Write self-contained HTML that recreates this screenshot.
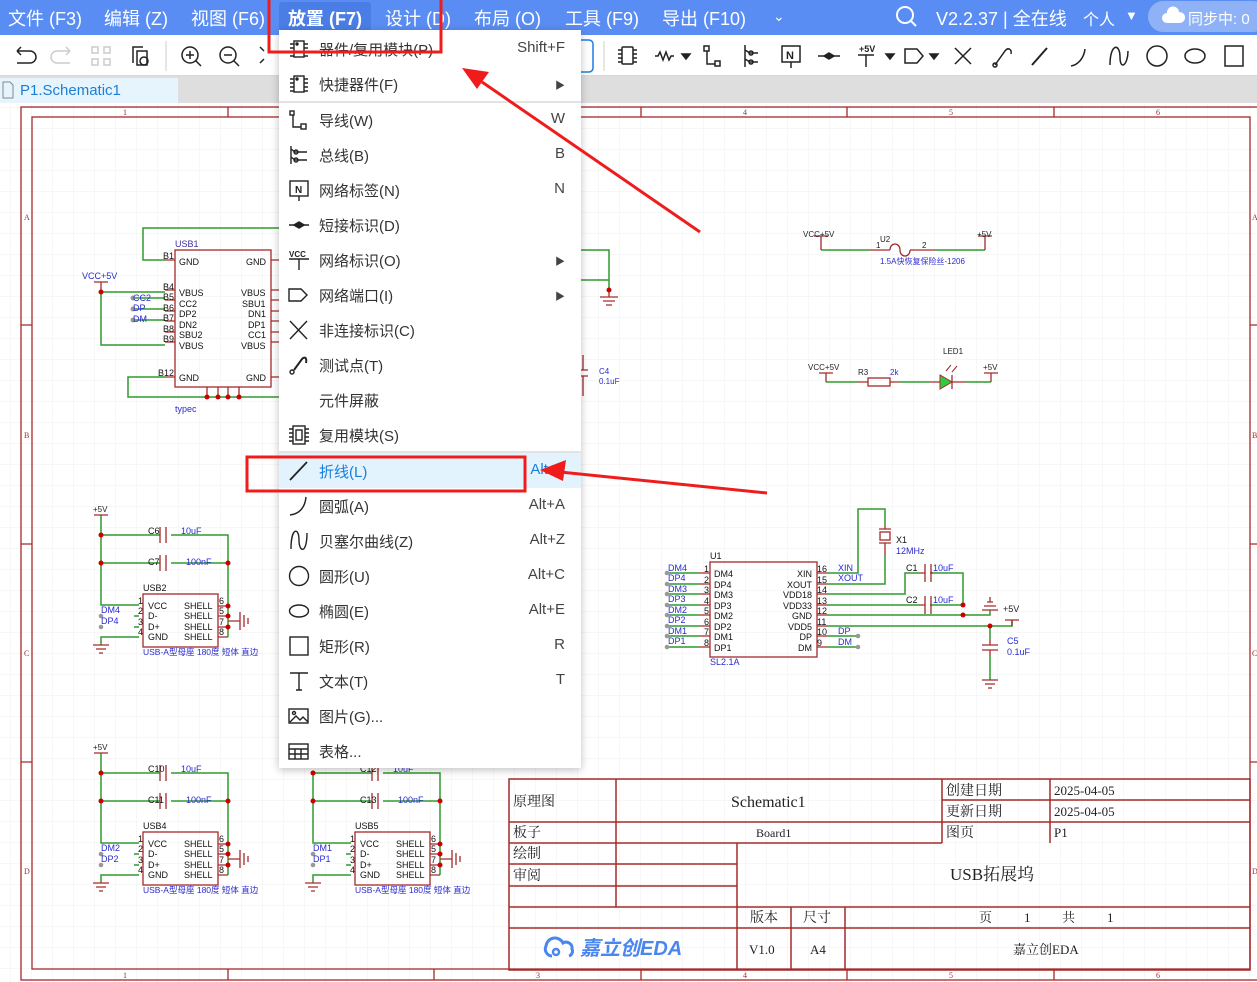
<!DOCTYPE html>
<html><head><meta charset="utf-8">
<style>
*{margin:0;padding:0;box-sizing:border-box}
body{width:1257px;height:982px;overflow:hidden;position:relative;background:#fff;font-family:"Liberation Sans","Noto Sans CJK SC",sans-serif}
#top{position:absolute;left:0;top:0;width:1257px;height:35px;background:#5a8df4;color:#fff;font-size:18px}
#top span{position:absolute;top:5px;white-space:nowrap}
#tb{position:absolute;left:0;top:35px;width:1257px;height:41px;background:#fff;border-bottom:1px solid #d8d8d8}
#gray{position:absolute;left:0;top:76px;width:1257px;height:28px;background:#dedede}
#tab{position:absolute;left:0;top:78px;width:178px;height:26px;background:#e5f4fd;color:#1c7fd6;font-size:15px;padding:4px 0 0 20px}
#canvas{position:absolute;left:0;top:103px}
#menu{position:absolute;left:279px;top:30px;width:302px;height:738px;background:#fff;box-shadow:0 2px 8px rgba(0,0,0,.25);font-size:15px;color:#333}
.mi{position:absolute;left:0;width:302px;height:35px}
.mi .t{position:absolute;left:40px;top:8px;white-space:nowrap}
.mi .k{position:absolute;right:16px;top:8px;color:#444}
.mi svg{position:absolute;left:9px;top:7px}
.sep{position:absolute;left:0;width:302px;height:2px;background:#e3e3e3}
</style></head><body>
<div id="top">
<span style="left:8px">文件 (F3)</span>
<span style="left:104px">编辑 (Z)</span>
<span style="left:191px">视图 (F6)</span>
<div style="position:absolute;left:279px;top:2px;width:92px;height:29px;background:#4a7ee6;border-radius:3px"></div>
<span style="left:288px;font-weight:bold">放置 (F7)</span>
<span style="left:385px">设计 (D)</span>
<span style="left:474px">布局 (O)</span>
<span style="left:565px">工具 (F9)</span>
<span style="left:662px">导出 (F10)</span>
<span style="left:773px;font-size:14px;top:8px">&#8964;</span>
<svg style="position:absolute;left:895px;top:5px" width="24" height="24"><circle cx="10" cy="10" r="8" fill="none" stroke="#fff" stroke-width="2"/><line x1="16" y1="16" x2="21" y2="21" stroke="#fff" stroke-width="2"/></svg>
<span style="left:936px">V2.2.37 | 全在线</span>
<span style="left:1083px;font-size:16px;top:6px">个人</span>
<span style="left:1125px;font-size:13px;top:8px">▼</span>
<div style="position:absolute;left:1148px;top:1px;width:120px;height:31px;border-radius:16px;background:#8fb2f6"></div>
<svg style="position:absolute;left:1162px;top:6px" width="24" height="20"><path d="M5 17a5 5 0 0 1 0-10a6 6 0 0 1 12-1a5 5 0 0 1 1 11z" fill="#fff"/></svg>
<span style="left:1188px;font-size:15px;top:8px">同步中: 0</span>
</div>
<div id="tb">
<svg width="1257" height="41" style="position:absolute;left:0;top:0" fill="none" stroke="#222" stroke-width="1.5">
<path d="M17 15h13a6 6 0 0 1 0 12h-13M17 15l4-4M17 15l4 4" transform="translate(0,1)"/>
<path d="M70 16h-13a6 6 0 0 0 0 12h13M70 16l-4-4M70 16l-4 4" stroke="#ccc"/>
<g stroke="#ccc"><rect x="92" y="12" width="6" height="6"/><rect x="104" y="12" width="6" height="6"/><rect x="92" y="24" width="6" height="6"/><rect x="104" y="24" width="6" height="6"/></g>
<path d="M133 28v-16h10M137 30v-14h10v14z"/><circle cx="144" cy="26" r="4"/>
<line x1="166" y1="6" x2="166" y2="36" stroke="#ddd"/>
<circle cx="190" cy="20" r="8"/><path d="M186 20h8M190 16v8M196 26l5 5"/>
<circle cx="228" cy="20" r="8"/><path d="M224 20h8M234 26l5 5"/>
<path d="M260 12l4 4M260 28l4-4"/>
<rect x="560" y="5" width="33" height="32" rx="4" stroke="#1b7fe0"/>
<line x1="604" y1="6" x2="604" y2="36" stroke="#ddd"/>
<rect x="622" y="12" width="11" height="17" rx="1"/><path d="M618 15h4M618 19h4M618 23h4M618 27h4M633 15h4M633 19h4M633 23h4M633 27h4"/>
<path d="M655 21h3l2-4 3 8 3-8 3 8 2-4h3"/><path d="M682 19h8l-4 5z" fill="#222"/>
<rect x="704" y="11" width="5" height="5"/><path d="M707 16v13h8"/><rect x="715" y="26" width="5" height="5"/>
<path d="M745 10v22M745 15l5 3h8M745 24l5 3h8"/><circle cx="751" cy="18" r="2"/><circle cx="751" cy="27" r="2"/>
<rect x="782" y="11" width="18" height="16"/><path d="M791 27v6"/><text x="786" y="24" font-size="11" fill="#222" stroke="none" font-weight="bold">N</text>
<path d="M818 21h22"/><path d="M824 21l5-3 5 3-5 3z" fill="#222"/>
<text x="859" y="17" font-size="9" fill="#222" stroke="none" font-weight="bold">+5V</text><path d="M858 20h16M866 20v12"/><path d="M886 19h8l-4 5z" fill="#222"/>
<path d="M905 14h12l6 7-6 7h-12z"/><path d="M930 19h8l-4 5z" fill="#222"/>
<path d="M955 13l16 16M971 13l-16 16"/>
<path d="M995 30l10-14c3-4 7-2 6 3" /><circle cx="995" cy="30" r="2"/>
<path d="M1032 30l15-17" stroke-width="2"/>
<path d="M1071 31c7-1 13-8 14-17"/>
<path d="M1110 30c0-22 10-22 10-8s8 8 8-6"/>
<circle cx="1157" cy="21" r="10"/>
<ellipse cx="1195" cy="21" rx="10" ry="7"/>
<rect x="1225" y="11" width="18" height="20"/>
</svg>
</div>
<div id="gray"></div>
<div id="tab">P1.Schematic1</div>
<svg style="position:absolute;left:2px;top:81px" width="12" height="18"><path d="M1 1h7l3 3v13h-10z" fill="none" stroke="#888"/></svg>

<svg id="canvas" width="1257" height="879" viewBox="0 103 1257 879" font-family="Liberation Sans, Noto Sans CJK SC, sans-serif">
<defs>
<pattern id="g" width="21" height="21" patternUnits="userSpaceOnUse" x="11" y="3"><path d="M21 0V21H0" fill="none" stroke="#efefef" stroke-width="1"/></pattern>
</defs>
<rect x="0" y="103" width="1257" height="879" fill="#fff"/>
<rect x="0" y="103" width="1257" height="879" fill="url(#g)"/>
<g fill="none" stroke="#a52a2a" stroke-width="1.3">
<rect x="21" y="107" width="1245" height="873"/>
<rect x="32" y="117" width="1218" height="852"/>
<path d="M228 107v10M434 107v10M641 107v10M847 107v10M1054 107v10M228 969v11M434 969v11M641 969v11M847 969v11M1054 969v11M21 325h11M21 544h11M21 762h11M1250 325h7M1250 544h7M1250 762h7"/>
</g>
<g font-size="8" fill="#a52a2a" font-family="Liberation Serif,serif">
<text x="123" y="115">1</text><text x="743" y="115">4</text><text x="949" y="115">5</text><text x="1156" y="115">6</text>
<text x="123" y="978">1</text><text x="536" y="978">3</text><text x="743" y="978">4</text><text x="949" y="978">5</text><text x="1156" y="978">6</text>
<text x="24" y="220">A</text><text x="24" y="438">B</text><text x="24" y="656">C</text><text x="24" y="874">D</text>
<text x="1252" y="220">A</text><text x="1252" y="438">B</text><text x="1252" y="656">C</text><text x="1252" y="874">D</text>
</g>

<g fill="none" stroke="#a52a2a" stroke-width="1.5">
<rect x="509" y="779" width="741" height="191"/>
<path d="M509 822h741M509 843h433M942 800h308M509 864h228M509 886h228M509 907h741M509 928h741M616 779v128M737 843v127M942 779v64M1050 779v64M791 907v63M845 907v63"/>
</g>
<g font-size="14" fill="#222" font-family="Liberation Serif,Noto Serif CJK SC,serif">
<text x="513" y="806">原理图</text>
<text x="731" y="807" font-size="16">Schematic1</text>
<text x="946" y="795">创建日期</text><text x="1054" y="795" font-size="13">2025-04-05</text>
<text x="946" y="816">更新日期</text><text x="1054" y="816" font-size="13">2025-04-05</text>
<text x="513" y="837">板子</text><text x="756" y="837" font-size="12">Board1</text>
<text x="946" y="837">图页</text><text x="1054" y="837" font-size="13">P1</text>
<text x="513" y="858">绘制</text><text x="513" y="880">审阅</text>
<text x="950" y="880" font-size="17">USB拓展坞</text>
<text x="750" y="922">版本</text><text x="803" y="922">尺寸</text>
<text x="979" y="922" font-size="13">页</text><text x="1024" y="922" font-size="13">1</text><text x="1062" y="922" font-size="13">共</text><text x="1107" y="922" font-size="13">1</text>
<text x="749" y="954" font-size="13">V1.0</text><text x="810" y="954" font-size="13">A4</text>
<text x="1013" y="954" font-size="13">嘉立创EDA</text>
</g>
<g>
<path d="M552 956a7 7 0 0 1-6-10a9 9 0 0 1 17-3a6 6 0 0 1 9 6a5 5 0 0 1-3 7" fill="none" stroke="#4a86f0" stroke-width="3"/>
<circle cx="556" cy="952" r="3" fill="none" stroke="#4a86f0" stroke-width="2.5"/>
<text x="580" y="955" font-size="20" font-weight="bold" fill="#4a86f0" font-style="italic">嘉立创EDA</text>
</g>

<g id="sch" font-size="9">
<g fill="none" stroke="#2f9a2f" stroke-width="1.5">
<path d="M165 260h-22v-32h140"/>
<path d="M101 292h64M101 292v53h64"/>
<path d="M133 298h32M133 309h32M133 320h32"/>
<path d="M165 377h-37v20h155"/>
<path d="M581 250h28v40M581 280h28"/>
<path d="M821 250h49M935 250h50M826 382h32M900 382h30M966 382h25"/>
</g>
<g fill="none" stroke="#a52a2a" stroke-width="1.3">
<rect x="175" y="250" width="96" height="137"/>
<path d="M165 260h10M165 290h10M165 300h10M165 311h10M165 321h10M165 332h10M165 342h10M165 377h10M271 260h10M271 290h10M271 300h10M271 311h10M271 321h10M271 332h10M271 342h10M271 377h10"/>
<path d="M207 387v10M218 387v10M228 387v10M239 387v10"/>
<path d="M94 282h14M101 282v10"/>
<path d="M600 297h18M603 301h12M606 305h6M609 290v7"/>
<path d="M583 355v15M578 370h10M578 376h10M583 376v20"/>
<path d="M814 236h14M821 236v14M978 236h14M985 236v14"/>
<path d="M870 250h20M910 250h25M890 250c0-8 10-8 10 0s10 8 10 0"/>
<path d="M819 373h14M826 373v9M984 373h14M991 373v9M858 382h10M890 382h10M930 382h10M952 382h14"/>
<rect x="868" y="378" width="22" height="8"/>
<path d="M952 375v14"/>
</g>
<path d="M940 375v14l12-7z" fill="#2ecc40" stroke="#a52a2a"/>
<path d="M946 371l5-6M952 372l5-6" stroke="#a52a2a"/>
<g fill="#c00"><circle cx="101" cy="292" r="2.5"/><circle cx="207" cy="397" r="2.5"/><circle cx="218" cy="397" r="2.5"/><circle cx="228" cy="397" r="2.5"/><circle cx="239" cy="397" r="2.5"/><circle cx="609" cy="290" r="2.5"/></g>
<g fill="#999"><circle cx="133" cy="298" r="2.5"/><circle cx="133" cy="309" r="2.5"/><circle cx="133" cy="320" r="2.5"/></g>
<g fill="#111">
<text x="179" y="265">GND</text><text x="246" y="265">GND</text>
<text x="179" y="296">VBUS</text><text x="179" y="307">CC2</text><text x="179" y="317">DP2</text><text x="179" y="328">DN2</text><text x="179" y="338">SBU2</text><text x="179" y="349">VBUS</text>
<text x="241" y="296">VBUS</text><text x="242" y="307">SBU1</text><text x="248" y="317">DN1</text><text x="248" y="328">DP1</text><text x="248" y="338">CC1</text><text x="241" y="349">VBUS</text>
<text x="179" y="381">GND</text><text x="246" y="381">GND</text>
<text x="163" y="259">B1</text><text x="163" y="290">B4</text><text x="163" y="300">B5</text><text x="163" y="311">B6</text><text x="163" y="321">B7</text><text x="163" y="332">B8</text><text x="163" y="342">B9</text><text x="158" y="376">B12</text>
</g>
<g fill="#2a2ad0">
<text x="175" y="247" fill="#3a2fa0">USB1</text><text x="82" y="279">VCC+5V</text>
<text x="133" y="301">CC2</text><text x="133" y="311">DP</text><text x="133" y="322">DM</text>
<text x="175" y="412">typec</text>
<text x="599" y="374" font-size="8">C4</text><text x="599" y="384" font-size="8">0.1uF</text>
<text x="803" y="237" fill="#222" font-size="8">VCC+5V</text><text x="977" y="237" fill="#222" font-size="8">+5V</text>
<text x="880" y="242" font-size="8" fill="#222">U2</text><text x="876" y="248" font-size="8" fill="#222">1</text><text x="922" y="248" font-size="8" fill="#222">2</text>
<text x="880" y="264" font-size="8">1.5A快恢复保险丝-1206</text>
<text x="808" y="370" fill="#222" font-size="8">VCC+5V</text><text x="983" y="370" fill="#222" font-size="8">+5V</text>
<text x="858" y="375" fill="#222" font-size="8">R3</text><text x="890" y="375" font-size="8">2k</text><text x="943" y="354" fill="#222" font-size="8">LED1</text>
</g>

<g fill="none" stroke="#2f9a2f" stroke-width="1.5">
<path d="M667 573h33M667 584h33M667 594h33M667 605h33M667 615h33M667 626h33M667 636h33M667 647h33"/>
<path d="M828 573h30v-64h27v16M828 584h57v-29"/>
<path d="M828 594h77v-21h15M930 573h33v32M828 605h92M930 605h33"/>
<path d="M828 615h162v-5M828 626h184v-6M828 636h30M828 647h30"/>
<path d="M990 626v14M990 655v25"/>
</g>
<g fill="none" stroke="#a52a2a" stroke-width="1.3">
<rect x="710" y="562" width="107" height="95"/>
<path d="M700 573h10M700 584h10M700 594h10M700 605h10M700 615h10M700 626h10M700 636h10M700 647h10M817 573h11M817 584h11M817 594h11M817 605h11M817 615h11M817 626h11M817 636h11M817 647h11"/>
<path d="M925 564v18M931 564v18M925 596v18M931 596v18M920 573h5M931 573h2M920 605h5"/>
<rect x="880" y="532" width="10" height="8"/><path d="M879 529h12M879 543h12M885 525v4M885 543v12"/>
<path d="M982 610h16M984 606h12M987 602h6M990 597v5"/>
<path d="M1005 620h14M1012 620v6"/>
<path d="M982 645h16M982 650h16M990 640v5M990 650v5M982 680h16M985 684h10M988 688h4"/>
</g>
<g fill="#c00"><circle cx="963" cy="605" r="2.5"/><circle cx="963" cy="615" r="2.5"/><circle cx="990" cy="626" r="2.5"/></g>
<g fill="#999"><circle cx="667" cy="573" r="2.3"/><circle cx="667" cy="584" r="2.3"/><circle cx="667" cy="594" r="2.3"/><circle cx="667" cy="605" r="2.3"/><circle cx="667" cy="615" r="2.3"/><circle cx="667" cy="626" r="2.3"/><circle cx="667" cy="636" r="2.3"/><circle cx="667" cy="647" r="2.3"/><circle cx="858" cy="636" r="2.3"/><circle cx="858" cy="647" r="2.3"/></g>
<g fill="#111">
<text x="714" y="577">DM4</text><text x="714" y="588">DP4</text><text x="714" y="598">DM3</text><text x="714" y="609">DP3</text><text x="714" y="619">DM2</text><text x="714" y="630">DP2</text><text x="714" y="640">DM1</text><text x="714" y="651">DP1</text>
<g text-anchor="end"><text x="812" y="577">XIN</text><text x="812" y="588">XOUT</text><text x="812" y="598">VDD18</text><text x="812" y="609">VDD33</text><text x="812" y="619">GND</text><text x="812" y="630">VDD5</text><text x="812" y="640">DP</text><text x="812" y="651">DM</text></g>
<text x="704" y="572">1</text><text x="704" y="583">2</text><text x="704" y="593">3</text><text x="704" y="604">4</text><text x="704" y="614">5</text><text x="704" y="625">6</text><text x="704" y="635">7</text><text x="704" y="646">8</text>
<text x="817" y="572">16</text><text x="817" y="583">15</text><text x="817" y="593">14</text><text x="817" y="604">13</text><text x="817" y="614">12</text><text x="817" y="625">11</text><text x="817" y="635">10</text><text x="817" y="646">9</text>
<text x="710" y="559">U1</text><text x="896" y="543">X1</text><text x="906" y="571">C1</text><text x="906" y="603">C2</text>
</g>
<g fill="#2a2ad0">
<text x="668" y="571">DM4</text><text x="668" y="581">DP4</text><text x="668" y="592">DM3</text><text x="668" y="602">DP3</text><text x="668" y="613">DM2</text><text x="668" y="623">DP2</text><text x="668" y="634">DM1</text><text x="668" y="644">DP1</text>
<text x="838" y="571">XIN</text><text x="838" y="581">XOUT</text><text x="838" y="634">DP</text><text x="838" y="645">DM</text>
<text x="710" y="665">SL2.1A</text><text x="896" y="554">12MHz</text><text x="933" y="571">10uF</text><text x="933" y="603">10uF</text>
<text x="1007" y="644">C5</text><text x="1007" y="655">0.1uF</text><text x="1003" y="612" fill="#222">+5V</text>
</g>
<g id="usbA"></g>
</g>
</svg>

<div id="menu">
<div class="mi" style="top:1px"><svg width="22" height="22" fill="none" stroke="#222" stroke-width="1.4"><rect x="6" y="3" width="10" height="16"/><path d="M2 6h4M2 10h4M2 14h4M2 18h4M16 6h4M16 10h4M16 14h4M16 18h4"/><circle cx="9" cy="6" r="1" fill="#222"/></svg><span class="t">器件/复用模块(P)</span><span class="k">Shift+F</span></div>
<div class="mi" style="top:36px"><svg width="22" height="22" fill="none" stroke="#222" stroke-width="1.4"><rect x="6" y="3" width="10" height="16"/><path d="M2 6h4M2 10h4M2 14h4M2 18h4M16 6h4M16 10h4M16 14h4M16 18h4"/><circle cx="9" cy="6" r="1" fill="#222"/></svg><span class="t">快捷器件(F)</span><span class="k" style="font-size:10px;top:11px">▶</span></div>
<div class="sep" style="top:71px"></div>
<div class="mi" style="top:72px"><svg width="22" height="22" fill="none" stroke="#222" stroke-width="1.4"><rect x="2" y="2" width="4" height="4"/><path d="M5 6v12h8"/><rect x="13" y="15" width="5" height="5"/></svg><span class="t">导线(W)</span><span class="k">W</span></div>
<div class="mi" style="top:107px"><svg width="22" height="22" fill="none" stroke="#222" stroke-width="1.4"><path d="M3 2v18M3 5l4 3h12M3 13l4 3h12"/><circle cx="8" cy="8" r="2"/><circle cx="8" cy="16" r="2"/></svg><span class="t">总线(B)</span><span class="k">B</span></div>
<div class="mi" style="top:142px"><svg width="22" height="22" fill="none" stroke="#222" stroke-width="1.4"><rect x="2" y="2" width="18" height="15"/><path d="M11 17v5"/><text x="7" y="14" font-size="10" fill="#222" stroke="none" font-weight="bold">N</text></svg><span class="t">网络标签(N)</span><span class="k">N</span></div>
<div class="mi" style="top:177px"><svg width="22" height="22" fill="none" stroke="#222" stroke-width="1.6"><path d="M1 11h20"/><path d="M6 11l5-3 5 3-5 3z" fill="#222"/></svg><span class="t">短接标识(D)</span></div>
<div class="mi" style="top:212px"><svg width="22" height="22" fill="none" stroke="#222" stroke-width="1.4"><text x="1" y="8" font-size="8" fill="#222" stroke="none" font-weight="bold">VCC</text><path d="M1 10h20M11 10v11"/></svg><span class="t">网络标识(O)</span><span class="k" style="font-size:10px;top:11px">▶</span></div>
<div class="mi" style="top:247px"><svg width="22" height="22" fill="none" stroke="#222" stroke-width="1.4"><path d="M1 5h12l6 6-6 6h-12z"/></svg><span class="t">网络端口(I)</span><span class="k" style="font-size:10px;top:11px">▶</span></div>
<div class="mi" style="top:282px"><svg width="22" height="22" fill="none" stroke="#222" stroke-width="1.4"><path d="M2 2l17 18M19 2l-17 18"/></svg><span class="t">非连接标识(C)</span></div>
<div class="mi" style="top:317px"><svg width="22" height="22" fill="none" stroke="#222" stroke-width="1.4"><circle cx="4" cy="18" r="2"/><path d="M6 16l8-11c3-3 5-1 4 4" stroke-width="2"/></svg><span class="t">测试点(T)</span></div>
<div class="mi" style="top:352px"><span class="t">元件屏蔽</span></div>
<div class="mi" style="top:387px"><svg width="22" height="22" fill="none" stroke="#222" stroke-width="1.4"><rect x="5" y="2" width="12" height="18"/><rect x="8" y="6" width="6" height="10"/><path d="M1 5h4M1 9h4M1 13h4M1 17h4M17 5h4M17 9h4M17 13h4M17 17h4"/></svg><span class="t">复用模块(S)</span></div>
<div class="sep" style="top:421px"></div>
<div class="mi" style="top:423px;background:#e3f3fd;color:#1a7fd8"><svg width="22" height="22" fill="none" stroke="#222" stroke-width="1.8"><path d="M2 20l17-18"/></svg><span class="t">折线(L)</span><span class="k" style="color:#1a7fd8">Alt+L</span></div>
<div class="mi" style="top:458px"><svg width="22" height="22" fill="none" stroke="#222" stroke-width="1.4"><path d="M2 20c9-1 15-7 16-18"/></svg><span class="t">圆弧(A)</span><span class="k">Alt+A</span></div>
<div class="mi" style="top:493px"><svg width="22" height="22" fill="none" stroke="#222" stroke-width="1.4"><path d="M3 19c0-22 8-22 8-9s8 14 8-7"/></svg><span class="t">贝塞尔曲线(Z)</span><span class="k">Alt+Z</span></div>
<div class="mi" style="top:528px"><svg width="22" height="22" fill="none" stroke="#222" stroke-width="1.4"><circle cx="11" cy="11" r="9.5"/></svg><span class="t">圆形(U)</span><span class="k">Alt+C</span></div>
<div class="mi" style="top:563px"><svg width="22" height="22" fill="none" stroke="#222" stroke-width="1.4"><ellipse cx="11" cy="11" rx="9.5" ry="6"/></svg><span class="t">椭圆(E)</span><span class="k">Alt+E</span></div>
<div class="mi" style="top:598px"><svg width="22" height="22" fill="none" stroke="#222" stroke-width="1.4"><rect x="2" y="2" width="18" height="18"/></svg><span class="t">矩形(R)</span><span class="k">R</span></div>
<div class="mi" style="top:633px"><svg width="22" height="22" fill="none" stroke="#222" stroke-width="1.4"><path d="M2 3h18M11 3v17M8 20h6"/></svg><span class="t">文本(T)</span><span class="k">T</span></div>
<div class="mi" style="top:668px"><svg width="22" height="22" fill="none" stroke="#222" stroke-width="1.4"><rect x="1" y="4" width="19" height="14"/><path d="M2 17l6-6 4 4 3-3 5 5"/><circle cx="6" cy="8" r="1.5"/></svg><span class="t">图片(G)...</span></div>
<div class="mi" style="top:703px"><svg width="22" height="22" fill="none" stroke="#222" stroke-width="1.4"><rect x="1" y="4" width="19" height="15"/><path d="M1 9h19M1 14h19M7 9v10M13 9v10"/></svg><span class="t">表格...</span></div>
</div>

<svg style="position:absolute;left:0;top:0" width="1257" height="982">
<g stroke="#f01c1c" fill="none" stroke-width="3">
<rect x="269" y="-5" width="172" height="57"/>
<rect x="247" y="457" width="278" height="34"/>
<path d="M767 493L560 472"/>
<path d="M700 232L482 82"/>
</g>
<path d="M540 470l26-10l-3 21z" fill="#f01c1c"/>
<path d="M462 68l27 4l-12 17z" fill="#f01c1c"/>
</svg>

<script>
(function(){
var g=document.getElementById("usbA");
function blk(dx,dy,c1,c2,n1,n2,showTop,name){
 var s='<g transform="translate('+dx+','+dy+')" font-size="9">';
 s+='<g fill="none" stroke="#2f9a2f" stroke-width="1.5"><path d="'+(showTop?'M101 515v90':'M101 535v70')+'h38M101 535h59M171 535h57v102M101 563h59M171 563h57M134 616h5M134 627h5M139 637h-38v8"/></g>';
 s+='<g fill="none" stroke="#a52a2a" stroke-width="1.3"><rect x="143" y="594" width="75" height="53"/><path d="M160 527v16M166 527v16M160 555v16M166 555v16M218 606h10M218 616h10M218 627h10M218 637h10M228 621h12M240 612v18M244 615v12M248 618v6M93 645h16M96 649h10M99 653h4'+(showTop?'M94 515h14':'')+'"/></g>';
 s+='<g fill="#c00"><circle cx="101" cy="535" r="2.5"/><circle cx="101" cy="563" r="2.5"/><circle cx="228" cy="563" r="2.5"/><circle cx="228" cy="606" r="2.5"/><circle cx="228" cy="616" r="2.5"/><circle cx="228" cy="627" r="2.5"/></g>';
 s+='<g fill="#999"><circle cx="101" cy="616" r="2.3"/><circle cx="101" cy="627" r="2.3"/></g>';
 s+='<g fill="#111"><text x="148" y="609">VCC</text><text x="148" y="619">D-</text><text x="148" y="630">D+</text><text x="148" y="640">GND</text><text x="184" y="609">SHELL</text><text x="184" y="619">SHELL</text><text x="184" y="630">SHELL</text><text x="184" y="640">SHELL</text><text x="138" y="604">1</text><text x="138" y="614">2</text><text x="138" y="625">3</text><text x="138" y="635">4</text><text x="219" y="604">6</text><text x="219" y="614">5</text><text x="219" y="625">7</text><text x="219" y="635">8</text><text x="143" y="591">'+name+'</text><text x="148" y="534">'+c1+'</text><text x="148" y="565">'+c2+'</text></g>';
 s+='<g fill="#2a2ad0"><text x="181" y="534">10uF</text><text x="186" y="565">100nF</text><text x="101" y="613">'+n1+'</text><text x="101" y="624">'+n2+'</text><text x="143" y="655" font-size="8.5">USB-A型母座 180度 短体 直边</text>'+(showTop?'<text x="93" y="512" fill="#222" font-size="8">+5V</text>':'')+'</g>';
 s+='</g>';return s;}
g.innerHTML=blk(0,0,'C6','C7','DM4','DP4',1,'USB2')+blk(0,238,'C10','C11','DM2','DP2',1,'USB4')+blk(212,238,'C12','C13','DM1','DP1',0,'USB5');
})();
</script>
</body></html>
